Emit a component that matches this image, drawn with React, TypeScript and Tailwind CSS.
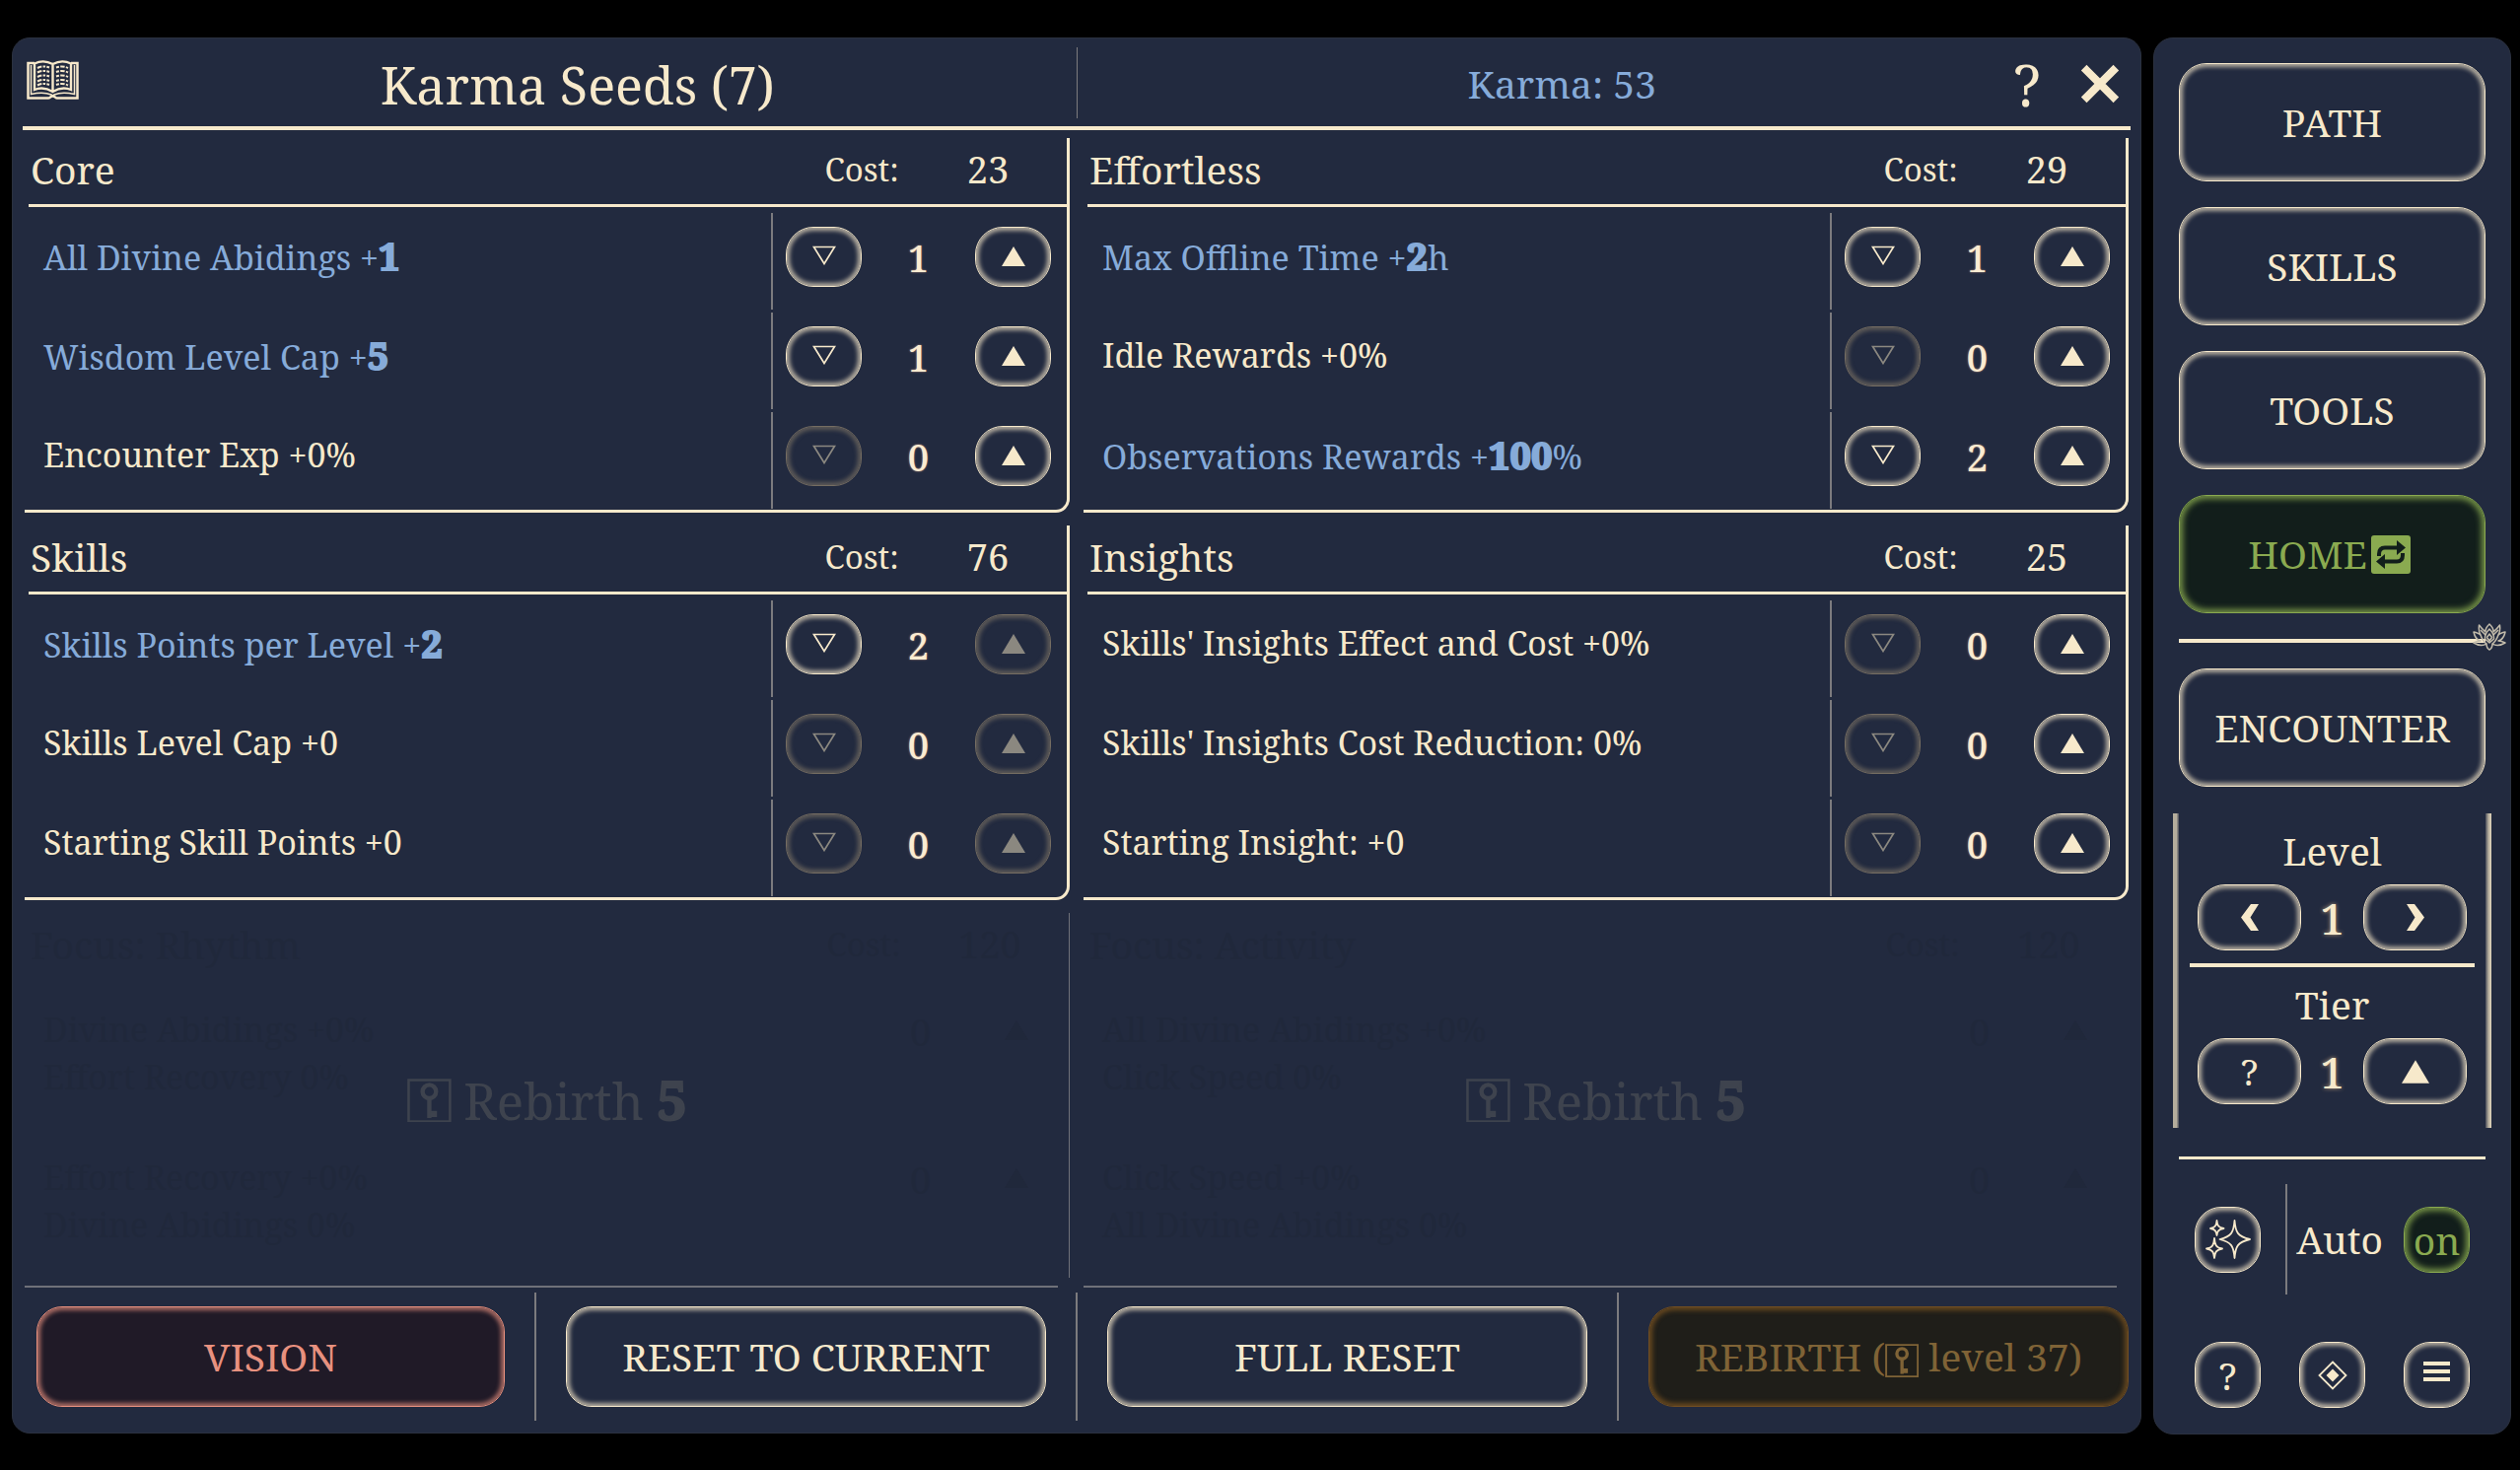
import type { ReactNode } from "react";

const RING =
  "border border-[#f7e9cb] text-[#f7e9cb] shadow-[inset_0_0_4px_3px_rgba(247,233,203,0.68)]";
const RING_DIM =
  "border border-[#756d62] text-[#8b8880] shadow-[inset_0_0_4px_3px_rgba(125,115,102,0.65)]";
const RING_GREEN =
  "border border-[#8aaa50] bg-[#121e1b] text-[#8aaa50] shadow-[inset_0_0_6px_3px_rgba(138,170,80,0.85)]";
const RING_RED =
  "border border-[#e8917f] bg-[#201a27] text-[#e8917f] shadow-[inset_0_0_4px_3px_rgba(232,145,127,0.68)]";
const RING_AMBER =
  "border border-[#714e22] bg-[#1f1e19] text-[#7f6336] shadow-[inset_0_0_5px_3px_rgba(120,82,34,0.8)]";

function BookIcon() {
  return (
    <svg viewBox="0 0 53 40" className="h-10 w-[53px]" fill="none" stroke="currentColor">
      <path d="M8 3H1.5V38.500H22C24 38.500 24 36.500 26.500 36.500S29 38.500 31 38.500H51.500V3H45" strokeWidth="2.500" />
      <path d="M4.500 5V34.500C11 33 19 32.500 25 35L26.500 36L28 35C34 32.500 42 33 48.500 34.500V5" strokeWidth="1.500" />
      <path d="M26.500 4C20 .5 13 1 8 3.500V30C14 27.500 20 28 26.500 32C33 28 39 27.500 45 30V3.500C40 1 33 .5 26.500 4ZM26.500 4V31" strokeWidth="2.400" />
      <path d="M11 8C15 6 19 6 23 7.500M11 12.500C15 10.500 19 10.500 23 12M11 17C15 15 19 15 23 16.500M11 21.500C15 19.500 19 19.500 23 21M11 25.500C15 23.500 19 23.500 23 25" strokeWidth="2" strokeDasharray="4.500 1.300 2.500 1.300" />
      <path d="M30 7.500C34 6 38 6 42 8M30 12C34 10.500 38 10.500 42 12.500M30 16.500C34 15 38 15 42 17M30 21C34 19.500 38 19.500 42 21.500M30 25C34 23.500 38 23.500 42 25.500" strokeWidth="2" strokeDasharray="3 1.300 4.500 1.300" />
    </svg>
  );
}

function KeyIcon() {
  return (
    <svg viewBox="0 0 46 46" className="inline-block size-[0.88em] align-[-0.17em]" fill="none" stroke="currentColor">
      <path d="M1.500 1.500H44.500V44.500H1.500Z" strokeWidth="2.600" />
      <circle cx="23" cy="13.500" r="7" strokeWidth="4.500" />
      <path d="M23 20V41" strokeWidth="4.500" />
      <path d="M24 34.500H30V39H24" strokeWidth="2" fill="currentColor" />
    </svg>
  );
}

function RepeatIcon() {
  return (
    <svg viewBox="0 0 40 39" className="h-[39px] w-10 shrink-0">
      <rect width="40" height="39" rx="3" fill="#8aaa50" />
      <g fill="none" stroke="#121e1b" strokeWidth="4">
        <path d="M8 21V19Q8 12.500 14 12.500H28" />
        <path d="M32 18V20Q32 26.500 26 26.500H12" />
      </g>
      <path d="M26 5L35 12.500L26 20Z" fill="#121e1b" />
      <path d="M14 19L5 26.500L14 34Z" fill="#121e1b" />
    </svg>
  );
}

function LotusIcon() {
  return (
    <svg viewBox="0 0 34 28" className="absolute -top-4 -right-[21px] h-7 w-[34px]" fill="none" stroke="#c3bcab" strokeWidth="1.500" strokeLinejoin="round">
      <path d="M17 1C14 4 12.500 6 13 9C9.500 6 8 4 6.500 2C6 6 6 9 8 12C5 10 3 9 1 9C2 14 4 17 8 18C5 18 3 19 1 20C6 23 11 23 14 21C14 24 15 26 17 27C19 26 20 24 20 21C23 23 28 23 33 20C31 19 29 18 26 18C30 17 32 14 33 9C31 9 29 10 26 12C28 9 28 6 27.500 2C26 4 24.500 6 21 9C21.500 6 20 4 17 1Z" />
      <path d="M17 6C14 9 12 12 12.500 16L17 20L21.500 16C22 12 20 9 17 6ZM8 12C9 15 10 18 14 21M26 12C25 15 24 18 20 21M17 11L14.500 14.500L17 18L19.500 14.500ZM8 7L13 12M26 7L21 12" />
    </svg>
  );
}

function SparklesIcon() {
  return (
    <svg viewBox="0 0 46 40" className="h-10 w-[46px]" fill="none" stroke="currentColor" strokeWidth="1.800" strokeLinejoin="round">
      <path d="M29.500 1C30.500 13 32.500 17 45 20C32.500 23 30.500 27 29.500 39C28.500 27 26.500 23 14.500 20C26.500 17 28.500 13 29.500 1Z" />
      <path d="M11.500 1C12 6 13 8 18.500 9C13 10 12 12 11.500 16C11 12 10 10 5 9C10 8 11 6 11.500 1Z" />
      <path d="M9 19C9.500 26 11 28.500 17 29.500C11 30.500 9.500 33 9 39C8.500 33 7 30.500 1 29.500C7 28.500 8.500 26 9 19Z" />
    </svg>
  );
}

function DownTriangle() {
  return (
    <svg viewBox="0 0 24 20" className="mb-1 h-5 w-6" fill="none" stroke="currentColor" strokeWidth="1.700">
      <path d="M1.500 1.500H22.500L12 18.500Z" />
    </svg>
  );
}

function UpTriangle({ large = false }: { large?: boolean }) {
  return (
    <svg viewBox="0 0 24 20" className={large ? "h-6 w-7" : "mb-0.5 h-5 w-6"} fill="currentColor">
      <path d="M12 0L24 20H0Z" />
    </svg>
  );
}

function Chevron({ right = false }: { right?: boolean }) {
  return (
    <svg viewBox="0 0 18 27" className="h-[27px] w-[18px]" fill="currentColor">
      <path d={right ? "M0 0H8L18 13.500L8 27H0L8.500 13.500Z" : "M18 0H10L0 13.500L10 27H18L9.500 13.500Z"} />
    </svg>
  );
}

function Bold({ children }: { children: ReactNode }) {
  return <b className="text-[38px] font-bold [-webkit-text-stroke:2px_currentColor]">{children}</b>;
}

function Stepper({ value, down, up }: { value: number; down: boolean; up: boolean }) {
  return (
    <div className="flex items-center pr-4 pl-[13px]">
      <button
        type="button"
        aria-label="Decrease"
        disabled={!down}
        className={`flex h-[61px] w-[77px] items-center justify-center rounded-[28px] ${down ? RING : RING_DIM}`}
      >
        <DownTriangle />
      </button>
      <span className="w-[115px] text-center text-[38px] leading-[60px] font-medium text-[#fbecd2] [text-shadow:0_0_2px_#c89a86]">
        {value}
      </span>
      <button
        type="button"
        aria-label="Increase"
        disabled={!up}
        className={`flex h-[61px] w-[77px] items-center justify-center rounded-[28px] ${up ? RING : RING_DIM}`}
      >
        <UpTriangle />
      </button>
    </div>
  );
}

type Seed = { label: ReactNode; value: number; active?: boolean; up?: boolean };

function SeedRow({ label, value, active = false, up = true }: Seed) {
  return (
    <div className="flex h-[98px]">
      <div className={`flex flex-1 items-center pb-3 pl-[15px] text-[34px] leading-normal ${active ? "text-[#86abd9]" : ""}`}>
        <p>{label}</p>
      </div>
      <div className="flex border-l-2 border-[#7c7b7e] pb-[9px]">
        <Stepper value={value} down={value > 0} up={up} />
      </div>
    </div>
  );
}

function SectionHeader({ title, cost }: { title: string; cost: number }) {
  return (
    <header className="flex h-[67px] items-center pb-1">
      <h2 className="flex-1 pl-0.5 text-[39px] leading-[50px]">{title}</h2>
      <span className="w-[180px] text-center text-[33px]">Cost:</span>
      <span className="w-[76px] text-center text-[38px]">{cost}</span>
      <span className="w-[42px]" />
    </header>
  );
}

function Section({ title, cost, seeds }: { title: string; cost: number; seeds: Seed[] }) {
  return (
    <section className="rounded-br-[14px] border-r-[3px] border-b-[3px] border-[#f7e9cb] pl-1">
      <SectionHeader title={title} cost={cost} />
      <hr className="border-t-[3px] border-[#f7e9cb]" />
      <div className="flex flex-col gap-[3px] pt-1.5 pb-px">
        {seeds.map((seed, i) => (
          <SeedRow key={i} {...seed} />
        ))}
      </div>
    </section>
  );
}

function LockedSection({ title, rows, divider = false }: { title: string; rows: [string, string][]; divider?: boolean }) {
  return (
    <section className="relative flex h-[380px] flex-col text-[#20283b]">
      <div className={`mb-2 flex-1 pl-1 ${divider ? "border-r border-[#6f7179]" : "mr-px"}`}>
        <SectionHeader title={title} cost={120} />
        {rows.map(([gain, loss]) => (
          <div key={gain} className="flex h-[150px] items-center">
            <p className="flex-1 pl-[15px] text-[34px] leading-[48px]">
              {gain}
              <br />
              {loss}
            </p>
            <span className="mb-11 w-[115px] text-center text-[38px]">0</span>
            <span className="mb-11 flex w-[93px] pl-7">
              <UpTriangle />
            </span>
          </div>
        ))}
      </div>
      <hr className="mr-3 border-t-2 border-[#6f7179]" />
      <p className="absolute inset-0 flex items-center justify-center gap-3 text-[51px] text-[#3e434e]">
        <KeyIcon />
        <span>
          Rebirth <b className="text-[54px] leading-none font-bold [-webkit-text-stroke:2px_currentColor]">5</b>
        </span>
      </p>
    </section>
  );
}

function SideButton({ children, active = false }: { children: ReactNode; active?: boolean }) {
  return (
    <button
      type="button"
      className={`flex h-[120px] w-full items-center justify-center gap-1 rounded-[28px] text-[39px] ${active ? `pr-1.5 ${RING_GREEN}` : RING}`}
    >
      {children}
    </button>
  );
}

function SmallButton({ label, children, active = false }: { label: string; children: ReactNode; active?: boolean }) {
  return (
    <button
      type="button"
      aria-label={label}
      className={`flex size-[67px] shrink-0 items-center justify-center rounded-[27px] text-[38px] leading-none ${active ? RING_GREEN : RING}`}
    >
      {children}
    </button>
  );
}

function Picker({ title, left, right }: { title: string; left: ReactNode; right: ReactNode }) {
  const button = `flex h-[67px] w-[105px] items-center justify-center rounded-[28px] text-[37px] leading-none ${RING}`;
  return (
    <div>
      <h3 className="text-center text-[39px] leading-[52px]">{title}</h3>
      <div className="mt-2 flex items-center justify-between px-[19px]">
        <button type="button" aria-label={`Lower ${title}`} className={button}>
          {left}
        </button>
        <span className="text-[44px] leading-[60px] font-medium [text-shadow:0_0_4px_#b89a78]">1</span>
        <button type="button" aria-label={`Raise ${title}`} className={button}>
          {right}
        </button>
      </div>
    </div>
  );
}

function Sidebar() {
  return (
    <aside className="flex w-[363px] shrink-0 flex-col rounded-[20px] border border-[#2b313f] bg-[#222a3f] px-[25px] pt-[25px] pb-[26px]">
      <nav className="flex flex-col gap-[26px]">
        <SideButton>PATH</SideButton>
        <SideButton>SKILLS</SideButton>
        <SideButton>TOOLS</SideButton>
        <SideButton active>
          HOME
          <RepeatIcon />
        </SideButton>
        <div className="relative">
          <hr className="border-t-4 border-[#f7e9cb]" />
          <LotusIcon />
        </div>
        <SideButton>ENCOUNTER</SideButton>
      </nav>
      <div className="-mx-[6px] mt-[27px] flex">
        <span className="w-1.5 bg-linear-to-r from-[#b5ad9c] from-60% to-[#4a4d59]" />
        <div className="flex flex-1 flex-col pt-3 pb-6">
          <Picker title="Level" left={<Chevron />} right={<Chevron right />} />
          <hr className="mx-[11px] mt-[13px] mb-3 border-t-4 border-[#f7e9cb]" />
          <Picker title="Tier" left="?" right={<UpTriangle large />} />
        </div>
        <span className="w-1.5 bg-linear-to-r from-[#4a4d59] via-[#b5ad9c] to-[#e2d6bc]" />
      </div>
      <hr className="mt-[29px] border-t-[3px] border-[#f7e9cb]" />
      <div className="mt-[25px] flex h-28 items-center justify-between px-4">
        <SmallButton label="Effects">
          <SparklesIcon />
        </SmallButton>
        <span className="ml-4 h-full w-0.5 bg-[#7c7b7e]" />
        <span className="text-[39px]">Auto</span>
        <span className="ml-3">
          <SmallButton label="Auto on" active>
            <span className="text-[39px]">on</span>
          </SmallButton>
        </span>
      </div>
      <div className="mt-12 flex justify-between px-4">
        <SmallButton label="Help">?</SmallButton>
        <SmallButton label="Focus">
          <svg viewBox="0 0 30 30" className="size-[30px]">
            <path d="M15 1.500L28.500 15L15 28.500L1.500 15Z" fill="none" stroke="currentColor" strokeWidth="1.800" />
            <path d="M15 8.500L21.500 15L15 21.500L8.500 15Z" fill="currentColor" />
          </svg>
        </SmallButton>
        <SmallButton label="Menu">
          <svg viewBox="0 0 27 20" className="mb-2 h-5 w-[27px]" fill="currentColor">
            <path d="M0 0H27V4H0ZM0 8H27V12H0ZM0 16H27V20H0Z" />
          </svg>
        </SmallButton>
      </div>
    </aside>
  );
}

function FooterButton({ tone, children }: { tone: string; children: ReactNode }) {
  return (
    <button type="button" className={`my-3.5 h-[102px] rounded-[26px] text-[39px] whitespace-nowrap ${tone}`}>
      {children}
    </button>
  );
}

export default function App() {
  return (
    <div className="flex min-h-screen items-start gap-3 bg-black pt-[38px] pr-[9px] pb-[37px] pl-3 font-['Noto_Serif','Liberation_Serif',serif] text-[#f7e9cb]">
      <main className="min-w-0 flex-1 rounded-[18px] border border-[#2b313f] bg-[#222a3f] pb-3">
        <header className="mx-2.5 flex h-[93px] items-center border-b-4 border-[#f7e9cb] pt-1">
          <div className="flex flex-1 items-center">
            <button type="button" aria-label="Journal" className="ml-1 pb-2.5">
              <BookIcon />
            </button>
            <h1 className="flex-1 text-center text-[52px] leading-[70px]">Karma Seeds (7)</h1>
          </div>
          <span className="mb-1 h-[72px] w-px bg-[#7c7b7e]" />
          <div className="flex flex-1 items-center">
            <p className="flex-1 pl-11 text-center text-[39px] text-[#86abd9]">Karma: 53</p>
            <button type="button" aria-label="Help" className="w-12 text-[58px] leading-[70px]">
              ?
            </button>
            <button type="button" aria-label="Close" className="mr-[11px] ml-[30px] pb-0.5">
              <svg viewBox="0 0 40 40" className="size-10" fill="none" stroke="currentColor" strokeWidth="8" strokeLinecap="square">
                <path d="M6.500 6.500L33.500 33.500M33.500 6.500L6.500 33.500" />
              </svg>
            </button>
          </div>
        </header>

        <div className="mx-3 grid grid-cols-2 gap-x-3.5 gap-y-[13px] pt-2">
          <Section
            title="Core"
            cost={23}
            seeds={[
              { label: <>All Divine Abidings +<Bold>1</Bold></>, value: 1, active: true },
              { label: <>Wisdom Level Cap +<Bold>5</Bold></>, value: 1, active: true },
              { label: "Encounter Exp +0%", value: 0 },
            ]}
          />
          <Section
            title="Effortless"
            cost={29}
            seeds={[
              { label: <>Max Offline Time +<Bold>2</Bold>h</>, value: 1, active: true },
              { label: "Idle Rewards +0%", value: 0 },
              { label: <>Observations Rewards +<Bold>100</Bold>%</>, value: 2, active: true },
            ]}
          />
          <Section
            title="Skills"
            cost={76}
            seeds={[
              { label: <>Skills Points per Level +<Bold>2</Bold></>, value: 2, active: true, up: false },
              { label: "Skills Level Cap +0", value: 0, up: false },
              { label: "Starting Skill Points +0", value: 0, up: false },
            ]}
          />
          <Section
            title="Insights"
            cost={25}
            seeds={[
              { label: "Skills' Insights Effect and Cost +0%", value: 0 },
              { label: "Skills' Insights Cost Reduction: 0%", value: 0 },
              { label: "Starting Insight: +0", value: 0 },
            ]}
          />
          <LockedSection
            title="Focus: Rhythm"
            divider
            rows={[
              ["Divine Abidings +0%", "Effort Recovery 0%"],
              ["Effort Recovery +0%", "Divine Abidings 0%"],
            ]}
          />
          <LockedSection
            title="Focus: Activity"
            rows={[
              ["All Divine Abidings +0%", "Click Speed 0%"],
              ["Click Speed +0%", "All Divine Abidings 0%"],
            ]}
          />
        </div>

        <footer className="mt-[5px] mr-3 ml-6 grid grid-cols-[475fr_2px_487fr_2px_487fr_2px_487fr] gap-x-[30px]">
          <FooterButton tone={RING_RED}>VISION</FooterButton>
          <span className="bg-[#7c7b7e]" />
          <FooterButton tone={RING}>RESET TO CURRENT</FooterButton>
          <span className="bg-[#7c7b7e]" />
          <FooterButton tone={RING}>FULL RESET</FooterButton>
          <span className="bg-[#7c7b7e]" />
          <FooterButton tone={RING_AMBER}>
            REBIRTH (<KeyIcon /> level 37)
          </FooterButton>
        </footer>
      </main>
      <Sidebar />
    </div>
  );
}
